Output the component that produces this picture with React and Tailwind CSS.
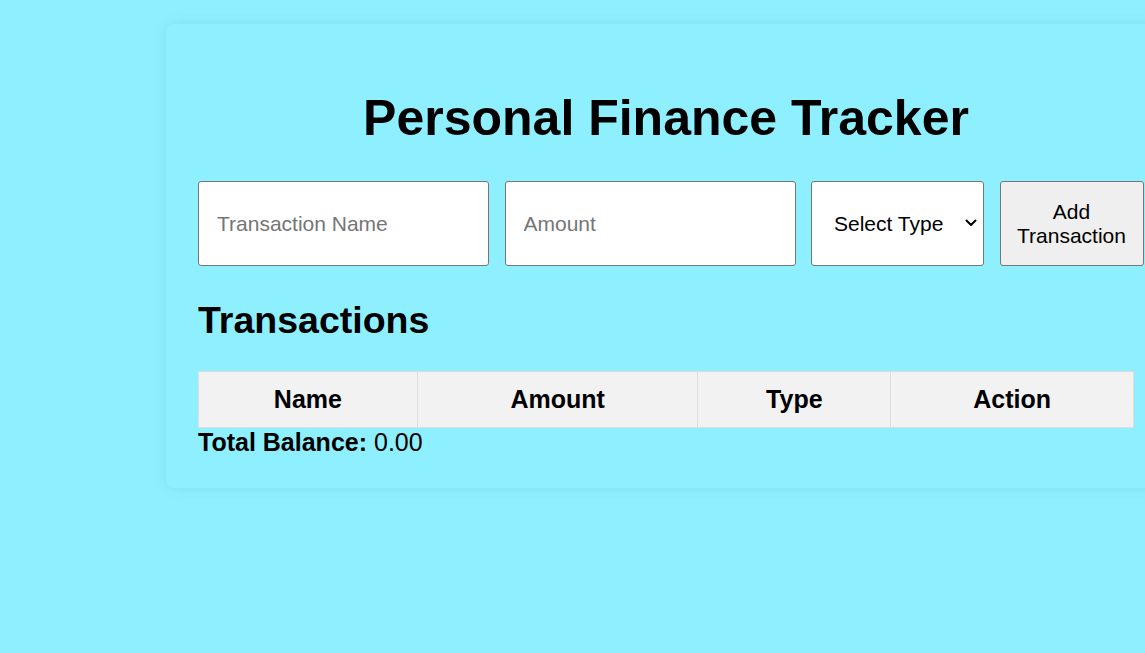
import React, { useState } from "react";

const columns = [
  { label: "Name", width: "w-[219px]" },
  { label: "Amount", width: "w-[281px]" },
  { label: "Type", width: "w-[193px]" },
  { label: "Action", width: "w-[243px]" },
];

export default function App() {
  const [name, setName] = useState("");
  const [amount, setAmount] = useState("");
  const [type, setType] = useState("");
  const [transactions] = useState([]);

  const total = transactions.reduce((sum, t) => sum + (t.type === "expense" ? -t.amount : t.amount), 0);

  return (
    <div className="min-h-screen w-full overflow-hidden bg-[#8ef0ff] pt-[24px] font-['Liberation_Sans',Arial,sans-serif] text-black">
      <div className="ml-[166px] w-[1000px] rounded-lg bg-[#8ef0ff] px-8 pt-8 pb-[31px] shadow-[0_0_14px_rgba(0,0,0,0.08)]">
        <h1 className="mt-[34px] mb-[34px] text-center text-[50px] font-bold leading-[57px]">
          Personal Finance Tracker
        </h1>

        <div className="flex gap-[15.5px]">
          <input
            value={name}
            onChange={(e) => setName(e.target.value)}
            placeholder="Transaction Name"
            className="h-[85px] w-[291px] shrink-0 rounded-[3px] border border-[#767676] bg-white px-[18px] text-[21px] outline-none placeholder:text-[#757575]"
          />
          <input
            value={amount}
            onChange={(e) => setAmount(e.target.value)}
            placeholder="Amount"
            className="h-[85px] w-[291px] shrink-0 rounded-[3px] border border-[#767676] bg-white px-[18px] text-[21px] outline-none placeholder:text-[#757575]"
          />
          <div className="relative h-[85px] w-[173px] shrink-0">
            <select
              value={type}
              onChange={(e) => setType(e.target.value)}
              className="h-full w-full appearance-none rounded-[3px] border border-[#767676] bg-white pl-[22px] text-[21px] text-black outline-none"
            >
              <option value="">Select Type</option>
              <option value="income">Income</option>
              <option value="expense">Expense</option>
            </select>
            <svg className="pointer-events-none absolute right-[7px] top-[38px]" width="12" height="8" viewBox="0 0 12 8" fill="none">
              <path d="M1.5 1.5 6 6l4.5-4.5" stroke="#000" strokeWidth="2" strokeLinecap="round" strokeLinejoin="round" />
            </svg>
          </div>
          <button className="h-[85px] w-[144px] shrink-0 rounded-[3px] border border-[#767676] bg-[#efefef] px-1 text-[21px] leading-[24px]">
            Add
            <br />
            Transaction
          </button>
        </div>

        <h2 className="mt-[33px] mb-[29px] text-[37.5px] font-bold leading-[43px]">Transactions</h2>

        <table className="w-[936px] border-collapse">
          <thead>
            <tr className="bg-[#f2f2f2]">
              {columns.map((c) => (
                <th key={c.label} className={`${c.width} h-[56px] border border-[#dddddd] text-center text-[25px] font-bold`}>
                  {c.label}
                </th>
              ))}
            </tr>
          </thead>
          <tbody />
        </table>

        <p className="text-[25px] leading-[29px]">
          <span className="font-bold">Total Balance:</span> {total.toFixed(2)}
        </p>
      </div>
    </div>
  );
}
